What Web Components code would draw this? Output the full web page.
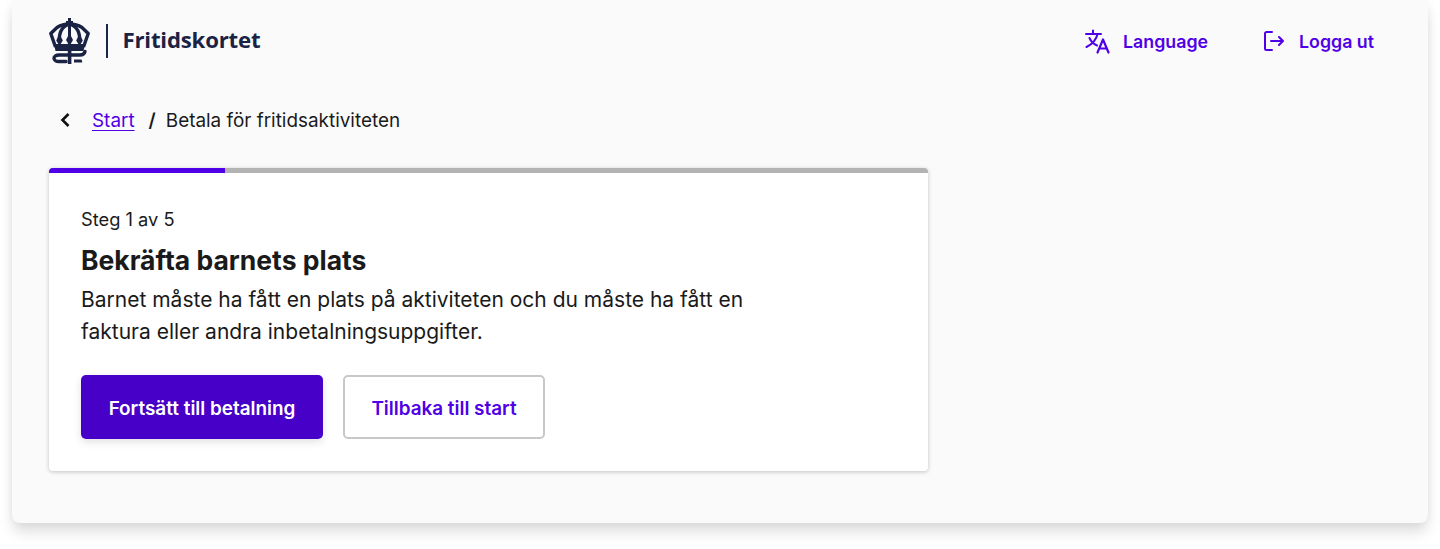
<!DOCTYPE html>
<html lang="sv">
<head>
<meta charset="utf-8">
<title>Fritidskortet</title>
<style>
  html, body { margin: 0; background: #fff; }
  body { height: 549px; font-family: "Inter", "Liberation Sans", sans-serif; color: #1a1a1a; }
</style>
</head>
<body>
<app-frame>
  <site-header></site-header>
  <bread-crumb current="Betala för fritidsaktiviteten">Start</bread-crumb>
  <step-card step="20" label="Steg 1 av 5" heading="Bekräfta barnets plats">
    Barnet måste ha fått en plats på aktiviteten och du måste ha fått en faktura eller andra inbetalningsuppgifter.
    <app-button slot="actions" kind="primary">Fortsätt till betalning</app-button>
    <app-button slot="actions" kind="secondary">Tillbaka till start</app-button>
  </step-card>
</app-frame>

<script>
class AppFrame extends HTMLElement {
  constructor () {
    super();
    this.attachShadow({mode: 'open'}).innerHTML = `
      <style>
      :host {
        display: block;
        box-sizing: border-box;
        width: 1416px;
        height: 523px;
        margin-left: 12px;
        padding: 0 37px;
        background: #fafafa;
        border-radius: 8px;
        box-shadow: 0 10px 14px -1px rgba(0,0,0,.13), 0 0 10px rgba(0,0,0,.06);
      }
      </style>
      <slot></slot>`;
  }
}

class SiteHeader extends HTMLElement {
  constructor () {
    super();
    this.attachShadow({mode: 'open'}).innerHTML = `
      <style>
      :host {
        display: flex;
        align-items: center;
        justify-content: space-between;
        height: 82px;
        padding-right: 17px;
      }
      .brand { display: flex; align-items: center; margin-top: -1px; }
      .brand svg { width: 41px; height: 46px; display: block; }
      .rule { width: 1.500px; height: 34px; background: #1d2547; margin: 0 15px 0 16px; }
      .name { font: 700 22.200px "Open Sans", sans-serif; letter-spacing: -.2px; color: #1b2345; margin-top: -2px; }
      nav { display: flex; gap: 55px; }
      a {
        display: flex; align-items: center; gap: 13px;
        font-size: 17.800px; font-weight: 600; color: #5000e6; text-decoration: none;
      }
      a.out { gap: 14px; }
      nav svg { display: block; fill: none; stroke: #5000e6; stroke-width: 2; stroke-linecap: round; stroke-linejoin: round; }
      </style>
      <div class="brand">
        <svg viewBox="0 0 41 46" aria-hidden="true">
          <g fill="none" stroke="#1b2345" stroke-width="3.400" stroke-linejoin="round">
            <path d="M6.500 29 1.800 15.500 8 9.500C12 7 16 6 20.500 6S29 7 33 9.500l6.200 6L34.500 29"/>
            <path d="M20.500 6C13 8.500 9.500 14 10.500 24"/>
            <path d="M20.500 6C28 8.500 31.500 14 30.500 24"/>
          </g>
          <path fill="#1b2345" d="M19 0h3v3h2v3h-2v22h-3V6h-2V3h2z"/>
          <path fill="#1b2345" d="M20.500 15l3.500 7-3.500 6-3.500-6zM10.500 16l3.300 6.500-3.300 5.500-3.300-5.500zM30.500 16l3.300 6.500-3.300 5.500-3.300-5.500z"/>
          <path fill="#1b2345" d="M5 26h31l-1.500 7h-28z"/>
          <path fill="none" stroke="#1b2345" stroke-width="3.400" stroke-linecap="round" d="M36 33.500c-.5 2-2 3.500-5 3.500H10c-3 0-5 1.300-5 3.200s2 3.300 5 3.300h7"/>
          <path fill="#1b2345" d="M18.800 32h3.600v14h-3.600zM25 41.500h7c.8 0 1.200 1.200 1.200 3H25z"/>
        </svg>
        <div class="rule"></div>
        <div class="name">Fritidskortet</div>
      </div>
      <nav>
        <a href="#language">
          <svg width="26" height="26" viewBox="0 0 26 26">
            <path d="M2 6h15M9 2.500V6M13.500 6c-1 5-5 10-11 13M5.500 10c1.500 3.500 4 6 7.500 7.500"/>
            <path d="M13.500 24.500 19 11.500l5.500 13M15.500 20.500h7" stroke-width="2.200"/>
          </svg>
          Language
        </a>
        <a class="out" href="#logout">
          <svg width="22" height="22" viewBox="0 0 22 22">
            <path d="M9 2H3.500C2.700 2 2 2.700 2 3.500v15c0 .8.700 1.500 1.500 1.500H9M8 11h12M16 7l4 4-4 4"/>
          </svg>
          Logga ut
        </a>
      </nav>`;
  }
}

class BreadCrumb extends HTMLElement {
  constructor () {
    super();
    this.attachShadow({mode: 'open'}).innerHTML = `
      <style>
      :host {
        display: flex;
        align-items: center;
        height: 24px;
        margin: 24px 0 36px;
        padding: 2px 0 0 10px;
        font-size: 18.900px;
        color: #1a1a1a;
      }
      svg { display: block; fill: none; stroke: #111; stroke-width: 2.600; margin-right: 21px; }
      a { color: #5000e6; text-decoration: underline; text-underline-offset: 3px; text-decoration-thickness: 1px; }
      .sep { margin: 0 10px 0 14px; font-weight: 600; }
      </style>
      <svg width="12" height="16" viewBox="0 0 12 16"><path d="M9.500 2 3.500 8l6 6"/></svg>
      <a href="#start"><slot></slot></a>
      <span class="sep">/</span>
      <span class="cur"></span>`;
    this.shadowRoot.querySelector('.cur').textContent = this.getAttribute('current');
  }
}

class StepCard extends HTMLElement {
  constructor () {
    super();
    this.attachShadow({mode: 'open'}).innerHTML = `
      <style>
      :host {
        display: block;
        width: 879px;
        height: 303px;
        box-sizing: border-box;
        background: #fff;
        border-radius: 4px;
        box-shadow: 0 1px 4px rgba(0,0,0,.22);
        overflow: hidden;
      }
      .bar { height: 5px; background: #b3b3b3; }
      .fill { height: 100%; background: #5000e6; }
      .body { padding: 35px 32px 0; }
      .label { font-size: 18.300px; line-height: 22px; }
      h2 { margin: 14px 0 8px; font-size: 26.500px; line-height: 32px; font-weight: 700; color: #1a1a1a; }
      p { margin: 0; width: 680px; font-size: 21px; line-height: 32px; }
      .actions { display: flex; gap: 20px; margin-top: 27px; }
      </style>
      <div class="bar"><div class="fill"></div></div>
      <div class="body">
        <div class="label"></div>
        <h2></h2>
        <p><slot></slot></p>
        <div class="actions"><slot name="actions"></slot></div>
      </div>`;
    this.shadowRoot.querySelector('.fill').style.width = this.getAttribute('step') + '%';
    this.shadowRoot.querySelector('.label').textContent = this.getAttribute('label');
    this.shadowRoot.querySelector('h2').textContent = this.getAttribute('heading');
  }
}

class AppButton extends HTMLElement {
  constructor () {
    super();
    this.attachShadow({mode: 'open'}).innerHTML = `
      <style>
      :host {
        display: flex;
        align-items: center;
        justify-content: center;
        box-sizing: border-box;
        height: 64px;
        padding-top: 2px;
        border-radius: 5px;
        font-size: 18.900px;
        font-weight: 600;
      }
      :host([kind="primary"]) {
        width: 242px;
        background: #4600c8;
        color: #fff;
        box-shadow: 0 3px 8px rgba(0,0,0,.12);
      }
      :host([kind="secondary"]) {
        width: 202px;
        background: #fff;
        color: #5000e6;
        border: 2px solid #c8c8c8;
      }
      </style>
      <slot></slot>`;
  }
}

customElements.define('app-frame', AppFrame);
customElements.define('site-header', SiteHeader);
customElements.define('bread-crumb', BreadCrumb);
customElements.define('step-card', StepCard);
customElements.define('app-button', AppButton);
</script>
</body>
</html>
